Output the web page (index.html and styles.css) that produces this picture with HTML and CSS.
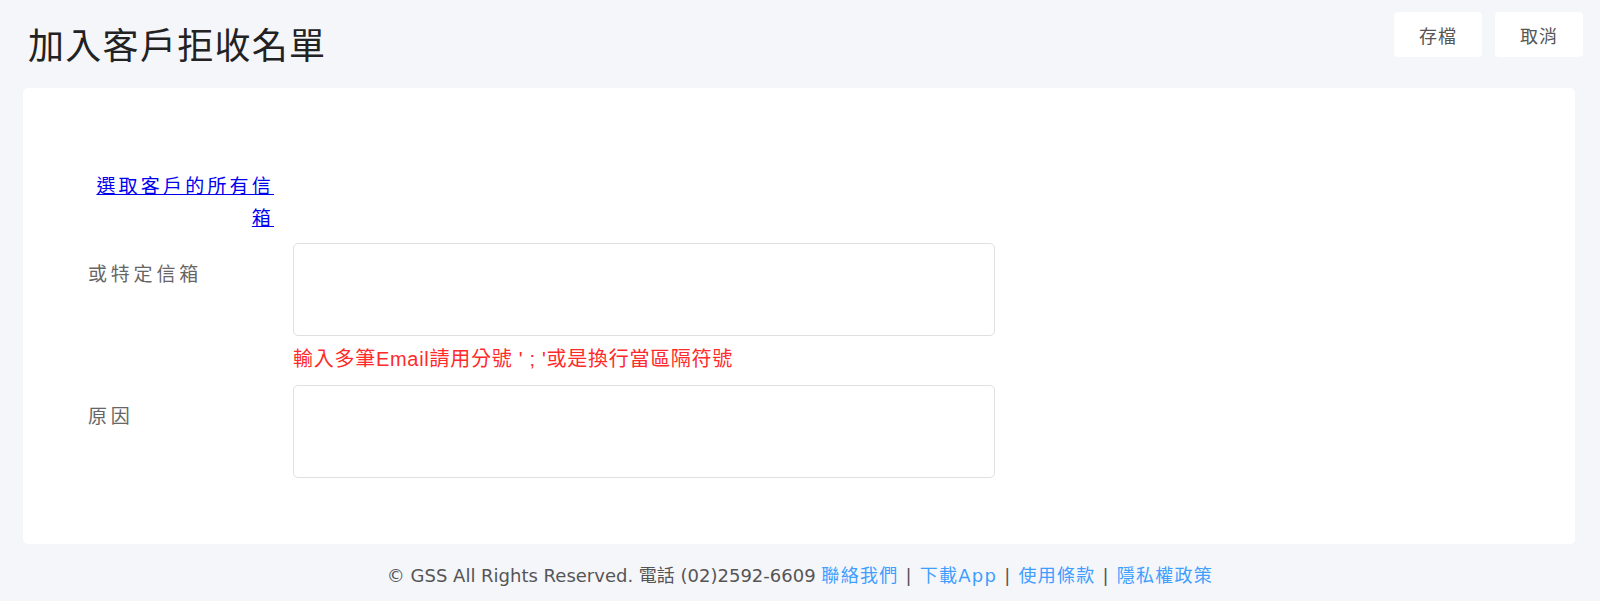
FILE: index.html
```html
<!DOCTYPE html>
<html lang="zh-Hant">
<head>
    <meta charset="UTF-8">
    <meta name="viewport" content="width=device-width, initial-scale=1.0">
    <title>加入客戶拒收名單</title>
    <link rel="stylesheet" href="styles.css">
</head>
<body>
    <header class="pageHead">
        <h1 class="pageTitle">加入客戶拒收名單</h1>
        <div class="actions">
            <button class="btn" type="button">存檔</button>
            <button class="btn" type="button">取消</button>
        </div>
    </header>

    <main class="card">
        <form class="form">
            <!-- all mailboxes -->
            <div class="row">
                <div class="label labelLink"><a href="#">選取客戶的所有信箱</a></div>
                <div></div>
            </div>

            <!-- specific mailboxes -->
            <div class="row">
                <label class="label" for="mailList">或特定信箱</label>
                <div class="field">
                    <textarea id="mailList" class="textBox"></textarea>
                    <p class="hint">輸入多筆Email請用分號 ' ; '或是換行當區隔符號</p>
                </div>
            </div>

            <!-- reason -->
            <div class="row">
                <label class="label" for="reason">原因</label>
                <div class="field">
                    <textarea id="reason" class="textBox"></textarea>
                </div>
            </div>
        </form>
    </main>

    <footer class="footer">
        © GSS All Rights Reserved. 電話 (02)2592-6609
        <a href="#">聯絡我們</a><span class="sep">|</span><a href="#">下載App</a><span class="sep">|</span><a href="#">使用條款</a><span class="sep">|</span><a href="#">隱私權政策</a>
    </footer>
</body>
</html>
```

FILE: styles.css
```css
body {
    margin: 0;
    background-color: #f5f6fa;
    font-family: "Noto Sans CJK TC", sans-serif;
}
.pageHead {
    display: flex;
    justify-content: space-between;
    align-items: flex-start;
    height: 88px;
    box-sizing: border-box;
    padding: 12px 17px 0 28px;
}
.pageTitle {
    margin: 13px 0 0 0;
    font-size: 36px;
    line-height: 36px;
    font-weight: normal;
    letter-spacing: 1.3px;
    color: #222222;
}
.actions {
    display: flex;
    gap: 13px;
}
.btn {
    width: 88px;
    height: 45px;
    border: none;
    border-radius: 4px;
    background-color: white;
    color: #555555;
    font-family: "Noto Sans CJK TC", sans-serif;
    font-size: 18px;
    letter-spacing: 1px;
    cursor: pointer;
}
.card {
    display: block;
    margin: 0 25px 0 23px;
    padding: 81px 0 66px 65px;
    background-color: white;
    border-radius: 5px;
}
.form {
    display: flex;
    flex-direction: column;
    gap: 10px;
}
.row {
    display: grid;
    grid-template-columns: 186px 702px;
    column-gap: 19px;
}
.label {
    font-size: 19px;
    line-height: 32px;
    letter-spacing: 3.8px;
    color: #666666;
    padding-top: 14px;
}
.labelLink {
    padding-top: 0;
    text-align: right;
    letter-spacing: 3.2px;
}
.labelLink a {
    color: #0000ee;
}
.field {
    display: flex;
    flex-direction: column;
}
.textBox {
    display: block;
    width: 702px;
    height: 93px;
    box-sizing: border-box;
    border: 1px solid #e0e0e0;
    border-radius: 5px;
    resize: none;
    margin: 0;
}
.hint {
    margin: 9px 0 2px 0;
    font-family: "Liberation Sans", "Noto Sans CJK TC", sans-serif;
    font-size: 20px;
    line-height: 28px;
    letter-spacing: 0.72px;
    color: #ff2a2a;
}
.footer {
    padding-top: 18px;
    text-align: center;
    font-family: "DejaVu Sans", "Noto Sans CJK TC", sans-serif;
    font-size: 18px;
    line-height: 28px;
    color: #555555;
}
.footer a {
    color: #409eff;
    text-decoration: none;
    letter-spacing: 1.3px;
}
.sep {
    margin: 0 8px 0 7px;
}
```
